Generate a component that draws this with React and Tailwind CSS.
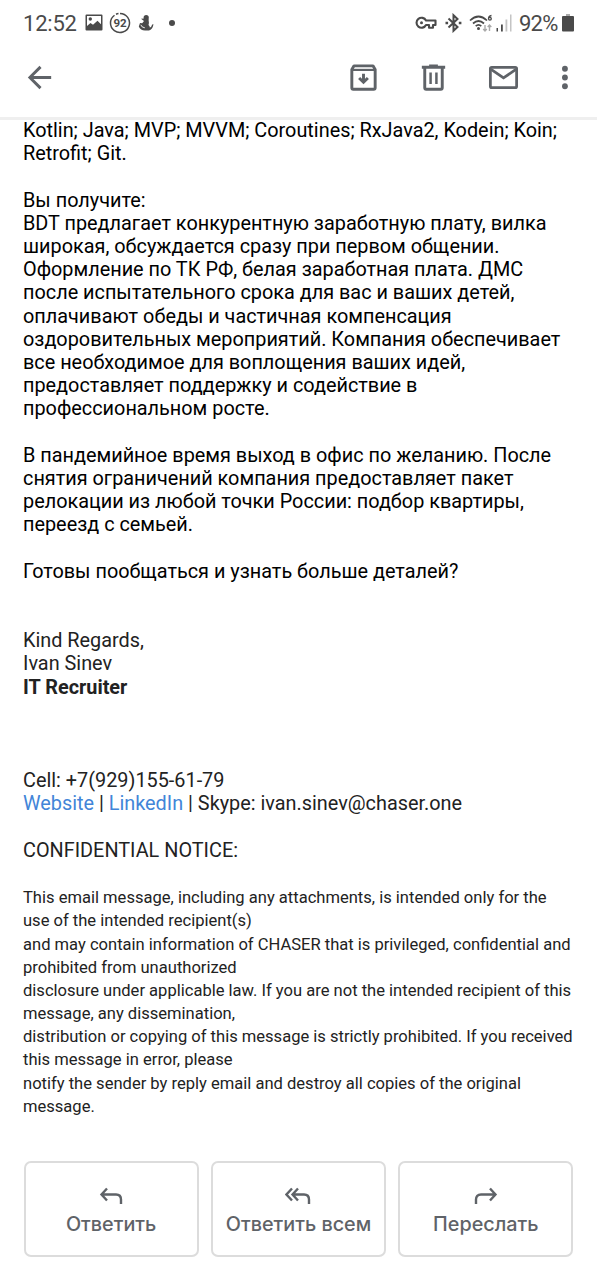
const letter = [
  'Kotlin; Java; MVP; MVVM; Coroutines; RxJava2, Kodein; Koin;',
  'Retrofit; Git.',
  '',
  'Вы получите:',
  'BDT предлагает конкурентную заработную плату, вилка',
  'широкая, обсуждается сразу при первом общении.',
  'Оформление по ТК РФ, белая заработная плата. ДМС',
  'после испытательного срока для вас и ваших детей,',
  'оплачивают обеды и частичная компенсация',
  'оздоровительных мероприятий. Компания обеспечивает',
  'все необходимое для воплощения ваших идей,',
  'предоставляет поддержку и содействие в',
  'профессиональном росте.',
  '',
  'В пандемийное время выход в офис по желанию. После',
  'снятия ограничений компания предоставляет пакет',
  'релокации из любой точки России: подбор квартиры,',
  'переезд с семьей.',
  '',
  'Готовы пообщаться и узнать больше деталей?',
]

const notice = [
  'This email message, including any attachments, is intended only for the',
  'use of the intended recipient(s)',
  'and may contain information of CHASER that is privileged, confidential and',
  'prohibited from unauthorized',
  'disclosure under applicable law. If you are not the intended recipient of this',
  'message, any dissemination,',
  'distribution or copying of this message is strictly prohibited. If you received',
  'this message in error, please',
  'notify the sender by reply email and destroy all copies of the original',
  'message.',
]

function Lines({ items }) {
  return items.map((line, i) => (
    <p key={i} className="h-[23.2px] whitespace-nowrap">
      {line}
    </p>
  ))
}

function StatusBar() {
  return (
    <div className="flex h-[46px] items-center justify-between pl-[23px] pr-[23px] text-[#4a4a4a]">
      <div className="flex items-center">
        <span className="w-[62px] pt-px text-[22px] tracking-[-0.2px]">12:52</span>
        <svg className="h-[18px] w-[18px]" viewBox="0 0 18 18" fill="currentColor">
          <path
            fillRule="evenodd"
            d="M1.5 0.5h15a1 1 0 0 1 1 1v14a1 1 0 0 1-1 1h-15a1 1 0 0 1-1-1v-14a1 1 0 0 1 1-1zM2 2v10l3.500-3 2.500 1.800 4.500-4 3.500 3.500V2z"
          />
          <circle cx="5.300" cy="5" r="1.700" />
        </svg>
        <svg className="ml-[6px] h-[22px] w-[22px]" viewBox="0 0 22 22">
          <path d="M11 1.500a9.500 9.500 0 1 1-5.500 1.750M7 2.300a9.500 9.500 0 0 1 2.500-.7" fill="none" stroke="currentColor" strokeWidth="1.500" />
          <text x="11" y="15" textAnchor="middle" fontSize="11.500" fontWeight="700" fill="currentColor">
            92
          </text>
        </svg>
        <svg className="ml-[7px] h-4 w-4" viewBox="0 0 16 16" fill="currentColor">
          <circle cx="8.200" cy="2.700" r="2.600" />
          <path d="M6.500 3.500 3 3.800 6 6 4.200 8.200 2 8 .8 11.500Q2.500 15.500 7 15.500h4q3.500-1 4.500-6.300l-1.300.2q-.7 2.500-2.400 3.200.2-1.600-1.300-2.600.8-1.800 0-6z" />
          <path d="M2.800 9.800q.8 2.700 4 3" stroke="#fff" strokeWidth=".9" fill="none" />
        </svg>
        <span className="ml-[15px] h-[6px] w-[6px] rounded-full bg-current" />
      </div>

      <div className="flex items-center">
        <svg className="h-[14px] w-[22px]" viewBox="0 0 22 14" fill="none" stroke="currentColor" strokeWidth="2.100">
          <path d="M11 4.500A5 5 0 1 0 11 9h3v2.800h4V9h2.500V4.500z" strokeLinejoin="round" />
          <circle cx="6.500" cy="6.800" r="1.500" fill="currentColor" stroke="none" />
        </svg>
        <svg className="ml-2 h-5 w-[17px]" viewBox="0 0 17 20" fill="none" stroke="currentColor" strokeWidth="2">
          <path d="M3.500 5.500l9 8.500L8.500 17.800V2.200l4 3.800-9 8.500" />
          <path d="M.5 10h2.600M13.800 10h2.600" strokeWidth="2.400" />
        </svg>
        <svg className="ml-[7px] h-[19px] w-6" viewBox="0 0 24 19" fill="none" stroke="currentColor" strokeWidth="1.700">
          <path d="M1 6.500Q9.500-1.500 18 6.500M4 9.500q5.500-5 11 0M6.700 12.200q2.800-2.500 5.600 0" />
          <circle cx="9.500" cy="14.600" r="1.500" fill="currentColor" stroke="none" />
          <path d="M22.500 1.500q-3 .5-3 3.300M19.500 4.800a1.400 1.400 0 1 0 2.800 0 1.400 1.400 0 1 0-2.800 0" strokeWidth="1.300" />
          <path d="M16 11v6m-1.800-2L16 17l1.800-2M20.500 17v-6m-1.800 2l1.800-2 1.800 2" stroke="#aaa" strokeWidth="1.400" />
        </svg>
        <svg className="ml-[3px] h-[18px] w-4" viewBox="0 0 16 18" fill="currentColor">
          <path d="M.5 14H2v3.500H.5zM5 10.500h1.800v7H5z" />
          <path d="M9.500 5.500h1.800v12H9.500zM14 .5h1.500v17H14z" fill="#c4c4c4" />
        </svg>
        <span className="ml-[7px] w-[41px] whitespace-nowrap pt-px text-[22px] tracking-[-0.8px]">92%</span>
        <svg className="ml-[2px] h-[18px] w-3" viewBox="0 0 12 18" fill="currentColor">
          <path d="M4 0h4v3H4z" fill="#aaa" />
          <rect y="2" width="12" height="15.500" rx="1" />
        </svg>
      </div>
    </div>
  )
}

function Toolbar() {
  return (
    <div className="flex h-[62px] items-center justify-between pl-[22px] pr-[15px] text-[#5f6368]">
      <svg className="h-[35px] w-[35px]" viewBox="0 0 24 24" fill="currentColor">
        <path d="M20 11H7.830l5.590-5.590L12 4l-8 8 8 8 1.410-1.410L7.830 13H20z" />
      </svg>
      <div className="flex items-center gap-[35px]">
        <svg className="h-[35px] w-[35px]" viewBox="0 0 24 24" fill="none" stroke="currentColor" strokeWidth="2">
          <path d="M4 6.500V19q0 1 1 1h14q1 0 1-1V6.500L18.500 4h-13z" strokeLinejoin="round" />
          <path d="M4 6.800h16" strokeWidth="1.500" />
          <path d="M12 9.500V15m-3-2.700 3 3 3-3" />
        </svg>
        <svg className="h-[35px] w-[35px]" viewBox="0 0 24 24" fill="none" stroke="currentColor" strokeWidth="2">
          <path d="M4 5h16M9 4h6M6 5v14q0 1 1 1h10q1 0 1-1V5" />
          <path d="M10 8.500v8M14 8.500v8" strokeWidth="1.700" />
        </svg>
        <svg className="h-[35px] w-[35px]" viewBox="0 0 24 24" fill="none" stroke="currentColor" strokeWidth="1.900">
          <rect x="3" y="5" width="18" height="14" rx="1" />
          <path d="m3.500 6.500 8.500 5.800 8.500-5.800" />
        </svg>
        <svg className="-ml-[9px] h-[35px] w-[35px]" viewBox="0 0 24 24" fill="currentColor">
          <circle cx="12.300" cy="6" r="2" />
          <circle cx="12.300" cy="12" r="2" />
          <circle cx="12.300" cy="18" r="2" />
        </svg>
      </div>
    </div>
  )
}

function ActionButton({ label, children }) {
  return (
    <button className="flex h-24 flex-col items-center rounded-[7px] border-2 border-[#dcdcdc] pt-6 text-[#5f6368]">
      <svg className="h-[19px] w-[26px]" viewBox="0 0 26 19" fill="none" stroke="currentColor" strokeWidth="2.400">
        {children}
      </svg>
      <span className="mt-[4px] whitespace-nowrap font-['Inter',sans-serif] text-[19.800px] font-medium leading-7">
        {label}
      </span>
    </button>
  )
}

export default function App() {
  return (
    <main className="h-[1280px] w-[597px] overflow-hidden bg-white font-['Roboto',sans-serif]">
      <header className="h-[120px] border-b-[3px] border-[#efefef]">
        <StatusBar />
        <Toolbar />
      </header>

      <article className="-mt-px h-[1042px] px-[23px] text-[19.85px] leading-[23.2px] text-[#222]">
        <div className="text-black">
          <Lines items={letter} />
        </div>
        <div className="mt-[46.4px]">
          <Lines items={['Kind Regards,', 'Ivan Sinev']} />
          <p className="h-[23.2px] font-bold">IT Recruiter</p>
        </div>
        <div className="mt-[70.3px] whitespace-nowrap">
          <p className="h-[23.2px]">Cell: +7(929)155-61-79</p>
          <p className="h-[23.2px]">
            <a className="text-[#4285d8]">Website</a> | <a className="text-[#4285d8]">LinkedIn</a> | Skype:
            ivan.sinev@chaser.one
          </p>
        </div>
        <p className="mt-[23.2px] h-[23.2px]">CONFIDENTIAL NOTICE:</p>
        <div className="mt-[24.4px] text-[16.56px]">
          <Lines items={notice} />
        </div>
      </article>

      <footer className="grid grid-cols-3 gap-3 px-[23.5px]">
        <ActionButton label="Ответить">
          <path d="M9 1.500 3.500 7.500 9 13.500M4 7.500h14q5 0 5 5V17" />
        </ActionButton>
        <ActionButton label="Ответить всем">
          <path d="M7 1.500 1.500 7.500 7 13.500M13 1.500 7.500 7.500 13 13.500M8 7.500h11q5 0 5 5V17" />
        </ActionButton>
        <ActionButton label="Переслать">
          <path d="M17 1.500 22.500 7.500 17 13.500M22 7.500H8q-5 0-5 5V17" />
        </ActionButton>
      </footer>
    </main>
  )
}
